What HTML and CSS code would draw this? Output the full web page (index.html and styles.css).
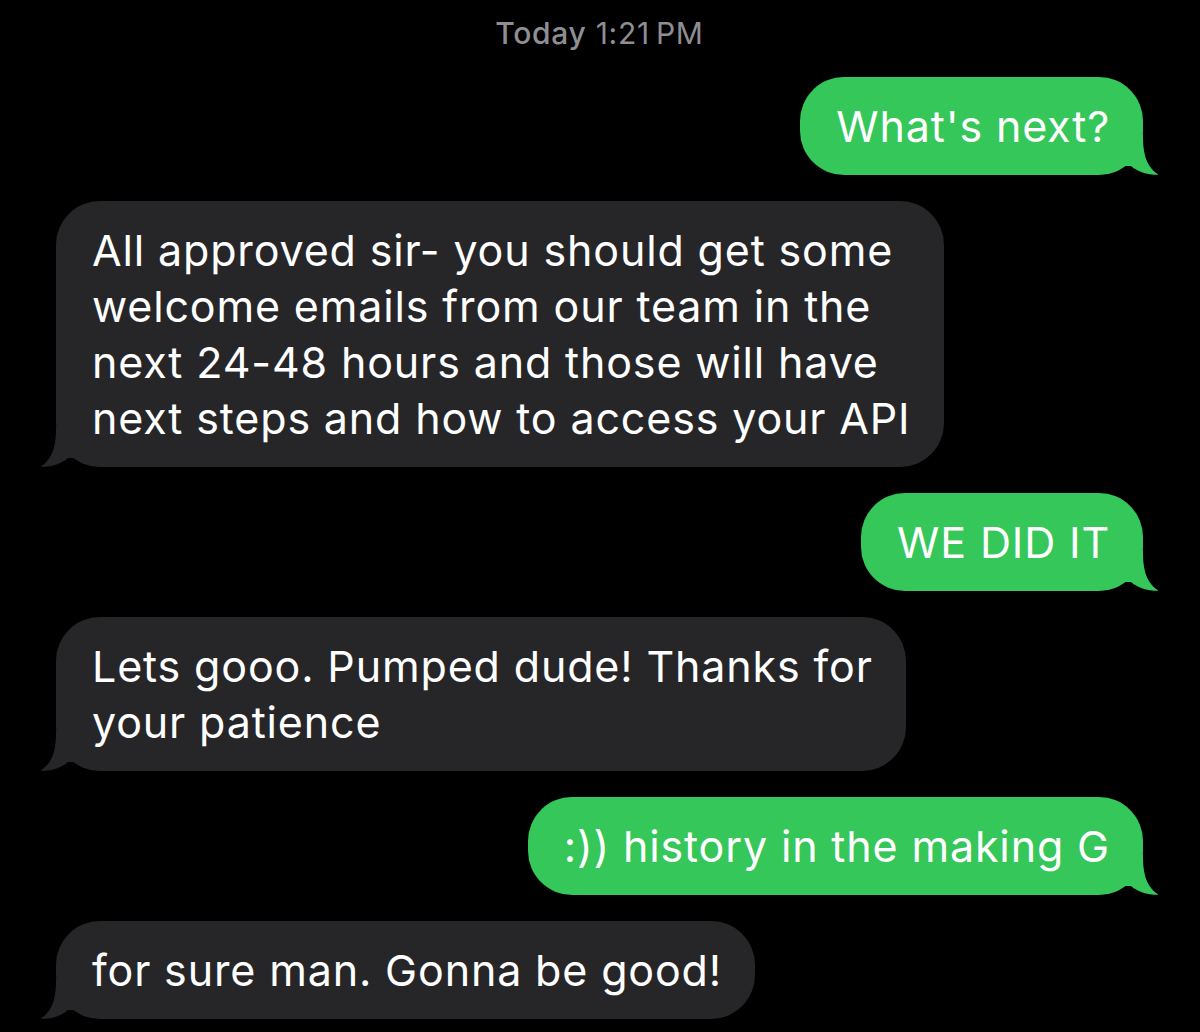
FILE: index.html
```html
<!DOCTYPE html>
<html lang="en">
<head>
<meta charset="utf-8">
<title>Messages</title>
<link rel="stylesheet" href="styles.css">
</head>
<body>
<div class="thread">
  <div class="stamp"><span class="stamp-day">Today</span> 1:21&#8239;PM</div>

  <div class="row sent">
    <div class="bubble">What's next?<svg class="tail" viewBox="0 0 36 42" width="36" height="42"><path d="M0 0 L20 0 L20 4 C20 24 26 35 35.5 40.5 C25 41.5 15 38 8 32 L0 32 Z"/></svg></div>
  </div>

  <div class="row received">
    <div class="bubble">All approved sir- you should get some<br>welcome emails from our team in the<br>next 24-48 hours and those will have<br>next steps and how to access your API<svg class="tail" viewBox="0 0 36 42" width="36" height="42"><path d="M0 0 L20 0 L20 4 C20 24 26 35 35.5 40.5 C25 41.5 15 38 8 32 L0 32 Z"/></svg></div>
  </div>

  <div class="row sent">
    <div class="bubble">WE DID IT<svg class="tail" viewBox="0 0 36 42" width="36" height="42"><path d="M0 0 L20 0 L20 4 C20 24 26 35 35.5 40.5 C25 41.5 15 38 8 32 L0 32 Z"/></svg></div>
  </div>

  <div class="row received">
    <div class="bubble">Lets gooo. Pumped dude! Thanks for<br>your patience<svg class="tail" viewBox="0 0 36 42" width="36" height="42"><path d="M0 0 L20 0 L20 4 C20 24 26 35 35.5 40.5 C25 41.5 15 38 8 32 L0 32 Z"/></svg></div>
  </div>

  <div class="row sent">
    <div class="bubble">:)) history in the making G<svg class="tail" viewBox="0 0 36 42" width="36" height="42"><path d="M0 0 L20 0 L20 4 C20 24 26 35 35.5 40.5 C25 41.5 15 38 8 32 L0 32 Z"/></svg></div>
  </div>

  <div class="row received">
    <div class="bubble">for sure man. Gonna be good!<svg class="tail" viewBox="0 0 36 42" width="36" height="42"><path d="M0 0 L20 0 L20 4 C20 24 26 35 35.5 40.5 C25 41.5 15 38 8 32 L0 32 Z"/></svg></div>
  </div>
</div>
</body>
</html>
```

FILE: styles.css
```css
html, body {
  margin: 0;
  padding: 0;
  background: #000;
}

body {
  font-family: "Inter", "Liberation Sans", sans-serif;
  color: #fff;
  width: 1200px;
  height: 1032px;
  overflow: hidden;
}

.thread {
  display: flex;
  flex-direction: column;
  gap: 26px;
  padding: 15px 57px 0 56px;
}

.stamp {
  text-align: center;
  color: #8e8e93;
  font-size: 30px;
  line-height: 36px;
  letter-spacing: 0.7px;
}

.stamp-day {
  font-weight: 500;
}

.row {
  display: flex;
}

.row.sent {
  justify-content: flex-end;
}

.row.received {
  justify-content: flex-start;
}

.bubble {
  position: relative;
  font-size: 43px;
  line-height: 56px;
  padding: 21px 33px 21px 36px;
  border-radius: 44px;
  letter-spacing: 0.85px;
  white-space: nowrap;
}

.sent .bubble {
  background: #35c759;
}

.received .bubble {
  background: #262628;
}

.tail {
  position: absolute;
  bottom: -1px;
  display: block;
}

.sent .tail {
  right: -16px;
  fill: #35c759;
}

.received .tail {
  left: -16px;
  transform: scaleX(-1);
  fill: #262628;
}
```
